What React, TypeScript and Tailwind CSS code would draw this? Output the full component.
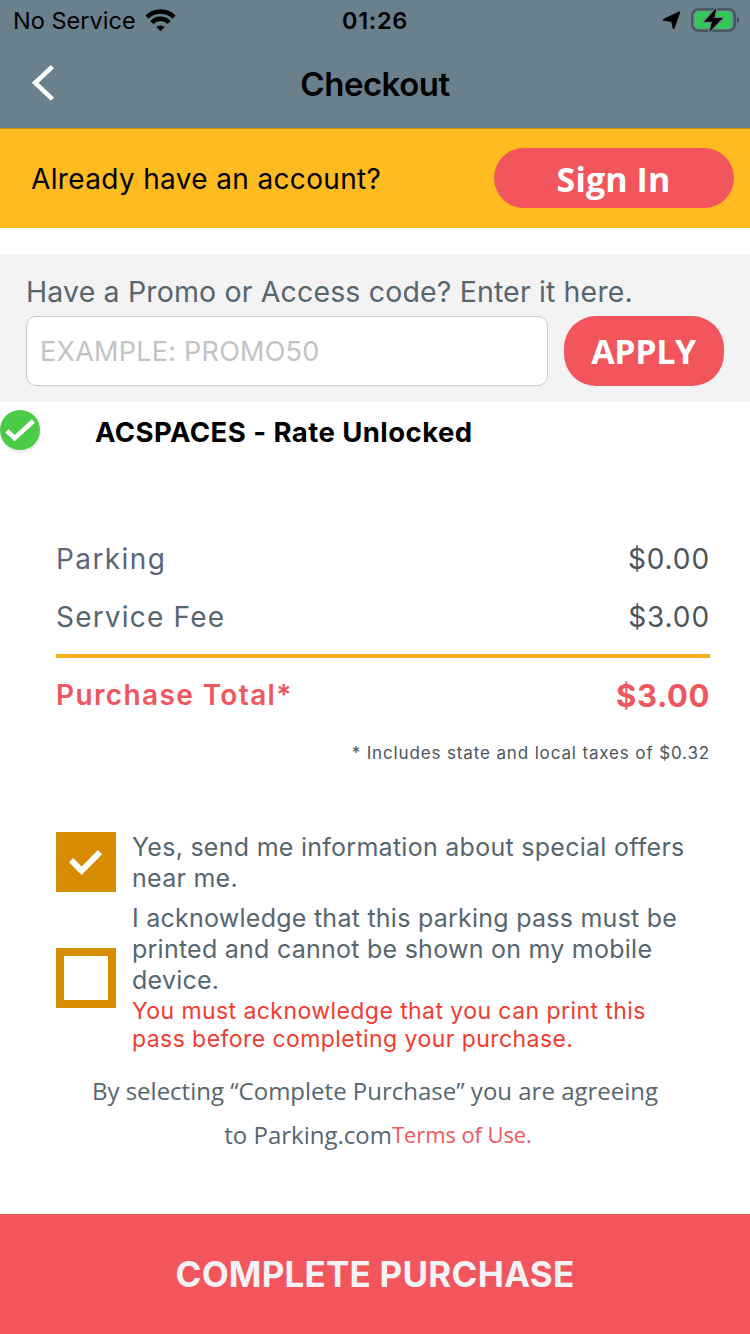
import React from "react";

function StatusBar() {
  return (
    <div className="grid h-10 grid-cols-3 items-center text-[23.5px] text-black">
      <div className="flex items-center pl-[13px]">
        <span className="w-[122px] whitespace-nowrap pt-[2px] tracking-[0.02px]">No Service</span>
        <svg className="ml-[10px] block" width="31" height="23" viewBox="0 0 31 23">
          <g fill="none" stroke="#000" strokeWidth="4.5">
            <path d="M2 8.1 A19.1 19.1 0 0 1 29 8.1" />
            <path d="M6.9 13.5 A12 12 0 0 1 24.1 13.5" />
          </g>
          <path d="M11.3 18.1 A6 6 0 0 1 19.7 18.1 L15.5 22.3 Z" fill="#000" />
        </svg>
      </div>
      <div className="whitespace-nowrap pt-[2px] text-center font-semibold tracking-[0.7px]">01:26</div>
      <div className="flex items-center justify-end pr-[10px]">
        <svg className="block" width="20" height="20" viewBox="0 0 20 20">
          <path
            d="M18.8 2.4 L13 18.6 Q12.6 19.4 12.2 18.6 L10.5 11.4 L2.5 10.3 Q1.6 9.9 2.5 9.3 L18.2 1.9 Q19.2 1.6 18.8 2.4 Z"
            fill="#000"
            stroke="#000"
            strokeWidth="0.8"
          />
        </svg>
        <svg className="ml-[10px] block" width="49" height="26" viewBox="0 0 49 26">
          <rect x="1.2" y="2.2" width="42.6" height="21.6" rx="6" fill="none" stroke="#414f5a" strokeWidth="1.9" />
          <path d="M46 9.6 Q48 10.4 48 13 Q48 15.6 46 16.4 Z" fill="#414f5a" />
          <rect x="3.6" y="4.6" width="37.6" height="16.8" rx="4" fill="#34c759" />
          <path
            d="M25.5 1 L13 14.8 H21 L18.4 25 L31.6 11 H23.2 Z"
            fill="#000"
            stroke="#6a808c"
            strokeWidth="2.6"
            paintOrder="stroke"
            strokeLinejoin="round"
          />
        </svg>
      </div>
    </div>
  );
}

function NavBar() {
  return (
    <div className="grid h-[88px] grid-cols-[1fr_auto_1fr] items-center">
      <svg className="ml-[30px] block" width="26" height="40" viewBox="0 0 26 40">
        <path d="M22.4 2.6 L5.2 18.8 L22.4 35.2" fill="none" stroke="#fff" strokeWidth="4.6" />
      </svg>
      <h1 className="pt-[2px] text-[33px] font-semibold tracking-[-0.5px] text-black">Checkout</h1>
    </div>
  );
}

function PriceRow({ label, amount, tone }: { label: string; amount: string; tone: string }) {
  return (
    <div className="flex h-[58px] items-center justify-between pb-px text-[28px]">
      <span className={tone}>{label}</span>
      <span className="tracking-[0.9px] text-[#4a555d]">{amount}</span>
    </div>
  );
}

export default function App() {
  return (
    <div className="flex h-[1334px] w-[750px] flex-col overflow-hidden bg-white font-['Inter',sans-serif]">
      <header className="h-32 shrink-0 bg-[#6a808c]">
        <StatusBar />
        <NavBar />
      </header>

      <section className="flex h-[100px] shrink-0 items-start justify-between border-t border-[#c98f1f] bg-[#ffbb20] pt-[19px] pr-4 pl-[31px]">
        <span className="whitespace-nowrap text-[28px] leading-[63px] tracking-[0.35px] text-black">
          Already have an account?
        </span>
        <button className="h-[60px] w-[240px] rounded-[30px] bg-[#f3555d] pr-px font-['Open_Sans',sans-serif] text-[34px] leading-[62px] font-bold tracking-[0.1px] text-white">
          Sign In
        </button>
      </section>

      <section className="mt-[26px] h-[148px] shrink-0 bg-[#f3f3f3] px-[26px] pt-[14px]">
        <div className="whitespace-nowrap text-[28.5px] leading-[48px] tracking-[0.15px] text-[#56666f]">
          Have a Promo or Access code? Enter it here.
        </div>
        <div className="flex gap-4">
          <div className="flex h-[70px] w-[522px] items-center rounded-[10px] border border-[#c9c9cb] bg-white pt-[2px] pl-[13px] text-[27px] tracking-[0.25px] text-[#c3c3c6]">
            EXAMPLE: PROMO50
          </div>
          <button className="h-[70px] w-[160px] rounded-[32px] bg-[#f3555d] pr-px font-['Open_Sans',sans-serif] text-[34px] leading-[70px] font-bold tracking-[-0.4px] text-white">
            APPLY
          </button>
        </div>
      </section>

      <section className="flex h-[60px] shrink-0 items-center">
        <svg className="-mt-1 block overflow-visible" width="40" height="40" viewBox="0 0 40 40">
          <circle cx="20.5" cy="23" r="20" fill="#ededed" />
          <circle cx="20" cy="20" r="20" fill="#4bcb48" />
          <path d="M7 20.8 L14.6 28.2 L33.4 11" fill="none" stroke="#fff" strokeWidth="4.6" />
        </svg>
        <span className="ml-[55px] whitespace-nowrap pt-[2px] text-[27.5px] font-bold tracking-[0.44px] text-black">
          ACSPACES - Rate Unlocked
        </span>
      </section>

      <section className="mt-[68px] shrink-0 pr-10 pl-14">
        <PriceRow label="Parking" amount="$0.00" tone="tracking-[1.4px] text-[#5c6478]" />
        <PriceRow label="Service Fee" amount="$3.00" tone="tracking-[1.2px] text-[#56666f]" />
        <div className="mt-2 h-1 bg-[#fdad19]" />
        <div className="flex h-[74px] items-center justify-between text-[#f0565e]">
          <span className="text-[28px] font-semibold tracking-[1.38px]">Purchase Total*</span>
          <span className="pt-[2px] text-[31px] font-bold tracking-[0.6px]">$3.00</span>
        </div>
        <div className="text-right text-[17px] leading-[42px] tracking-[0.86px] text-[#4a555d]">
          * Includes state and local taxes of $0.32
        </div>
      </section>

      <section className="mt-[57px] shrink-0 pl-14 text-[25px] leading-[31px] text-[#56666f]">
        <div className="flex gap-4">
          <div className="mt-px size-[60px] shrink-0 bg-[#d78b00]">
            <svg className="block" width="60" height="60" viewBox="0 0 60 60">
              <path d="M15 28.2 L25.6 38.8 L44 20.2" fill="none" stroke="#fff" strokeWidth="6" />
            </svg>
          </div>
          <div className="whitespace-nowrap pt-px tracking-[0.27px]">
            Yes, send me information about special offers
            <br />
            near me.
          </div>
        </div>
        <div className="mt-[8px] flex gap-4">
          <div className="mt-[46px] size-[60px] shrink-0 border-8 border-[#d78b00] bg-white" />
          <div className="whitespace-nowrap">
            <div className="pt-px tracking-[0.25px]">
              I acknowledge that this parking pass must be
              <br />
              printed and cannot be shown on my mobile
              <br />
              device.
            </div>
            <div className="mt-px text-[23px] leading-[28px] tracking-[0.43px] text-[#f23b31]">
              You must acknowledge that you can print this
              <br />
              pass before completing your purchase.
            </div>
          </div>
        </div>
      </section>

      <section className="mt-[16px] shrink-0 text-center font-['Open_Sans',sans-serif] text-[24px] leading-[44px] text-[#56666f]">
        <div>By selecting “Complete Purchase” you are agreeing</div>
        <div className="flex justify-center pl-[6px]">
          <span>to Parking.com</span>
          <a className="-mt-px text-[22px] tracking-[-0.1px] text-[#f0565e]">Terms of Use.</a>
        </div>
      </section>

      <button className="mt-auto h-[120px] shrink-0 bg-[#f3555d] text-[35px] font-bold tracking-[0.22px] text-[#f3f3f7]">
        COMPLETE PURCHASE
      </button>
    </div>
  );
}
